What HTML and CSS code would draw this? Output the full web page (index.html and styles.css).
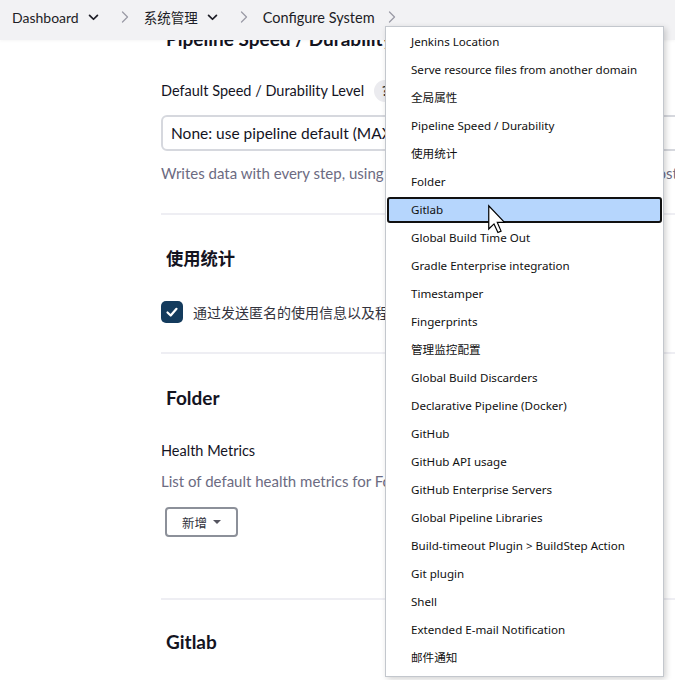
FILE: index.html
```html
<!DOCTYPE html>
<html lang="zh">
<head>
<meta charset="utf-8">
<title>Configure System</title>
<link rel="stylesheet" href="styles.css">
</head>
<body>
<header class="topbar">
  <nav class="crumbs">
    <span class="crumb">Dashboard</span>
    <svg class="drop" viewBox="0 0 12 8"><path d="M1.5 1.5 L6 6 L10.5 1.5" /></svg>
    <svg class="sep" viewBox="0 0 8 12"><path d="M1.5 1 L6.5 6 L1.5 11" /></svg>
    <span class="crumb cjk">系统管理</span>
    <svg class="drop" viewBox="0 0 12 8"><path d="M1.5 1.5 L6 6 L10.5 1.5" /></svg>
    <svg class="sep" viewBox="0 0 8 12"><path d="M1.5 1 L6.5 6 L1.5 11" /></svg>
    <span class="crumb wide">Configure System</span>
    <svg class="sep" viewBox="0 0 8 12"><path d="M1.5 1 L6.5 6 L1.5 11" /></svg>
  </nav>
</header>

<main class="content">
  <section class="section first">
    <h2 class="heading">Pipeline Speed / Durability</h2>
    <div class="label-row">
      <span class="label">Default Speed / Durability Level</span>
      <span class="help">?</span>
    </div>
    <div class="select">None: use pipeline default (MAX_SURVIVABILITY)</div>
    <p class="desc">Writes data with every step, using atomic writes, which is the slowest but most robust option to run</p>
  </section>

  <section class="section">
    <h2 class="heading cjk">使用统计</h2>
    <label class="check-row">
      <span class="checkbox"><svg viewBox="0 0 22 22"><path d="M6.5 11.5 L9.7 14.5 L15.5 7.8" /></svg></span>
      <span class="check-text">通过发送匿名的使用信息以及程序崩溃报告来帮助 Jenkins 做得更好。</span>
    </label>
  </section>

  <section class="section">
    <h2 class="heading">Folder</h2>
    <div class="label-row folder-label"><span class="label">Health Metrics</span></div>
    <p class="desc tight">List of default health metrics for Folders</p>
    <button class="add-btn">新增 <span class="caret"></span></button>
  </section>

  <section class="section last">
    <h2 class="heading">Gitlab</h2>
  </section>
</main>

<div class="menu">
  <div class="item">Jenkins Location</div>
  <div class="item">Serve resource files from another domain</div>
  <div class="item">全局属性</div>
  <div class="item">Pipeline Speed / Durability</div>
  <div class="item">使用统计</div>
  <div class="item">Folder</div>
  <div class="item active">Gitlab</div>
  <div class="item">Global Build Time Out</div>
  <div class="item">Gradle Enterprise integration</div>
  <div class="item">Timestamper</div>
  <div class="item">Fingerprints</div>
  <div class="item">管理监控配置</div>
  <div class="item">Global Build Discarders</div>
  <div class="item">Declarative Pipeline (Docker)</div>
  <div class="item">GitHub</div>
  <div class="item">GitHub API usage</div>
  <div class="item">GitHub Enterprise Servers</div>
  <div class="item">Global Pipeline Libraries</div>
  <div class="item">Build-timeout Plugin &gt; BuildStep Action</div>
  <div class="item">Git plugin</div>
  <div class="item">Shell</div>
  <div class="item">Extended E-mail Notification</div>
  <div class="item">邮件通知</div>
</div>

<svg class="cursor" viewBox="0 0 12 19" width="18" height="28.5">
  <path d="M0.5 0.5 L0.5 16 L4 12.6 L6.6 18.3 L8.7 17.4 L6.2 11.6 L11 11.6 Z" />
</svg>
</body>
</html>
```

FILE: styles.css
```css
html, body {
  margin: 0;
  padding: 0;
  background: #ffffff;
  overflow: hidden;
}

body {
  width: 675px;
  height: 680px;
  position: relative;
  font-family: Lato, "Noto Sans CJK SC", sans-serif;
  color: #14141f;
}

.topbar {
  position: absolute;
  top: 0;
  left: 0;
  right: 0;
  height: 40px;
  background: #f2f2f4;
  box-shadow: 0 1px 3px rgba(0, 0, 0, 0.04);
  z-index: 5;
}

.crumbs {
  display: flex;
  align-items: center;
  height: 34px;
  padding-left: 12px;
  font-size: 14px;
  color: #1d1d26;
}

.crumb {
  white-space: nowrap;
}

.crumb.cjk {
  font-size: 13.5px;
}

.crumb.wide {
  font-size: 14.5px;
}

.drop {
  width: 11px;
  height: 7px;
  margin-left: 9px;
  margin-right: 22px;
  fill: none;
  stroke: #1d1d26;
  stroke-width: 2;
  stroke-linecap: round;
  stroke-linejoin: round;
}

.sep {
  width: 8px;
  height: 12px;
  margin-right: 15px;
  fill: none;
  stroke: #9b9ba6;
  stroke-width: 1.3;
  stroke-linecap: round;
  stroke-linejoin: round;
}

.crumb + .sep {
  margin-left: 13px;
}

.content {
  padding: 25px 0 0 161px;
  width: 700px;
}

.section {
  border-top: 2px solid #eeeef3;
  padding-top: 30px;
}

.section.first {
  border-top: none;
  padding-top: 0;
  padding-bottom: 30px;
}

.section.last {
  padding-top: 28px;
}

.heading {
  margin: 0 0 0 5px;
  font-size: 19px;
  line-height: 28px;
  font-weight: 700;
  white-space: nowrap;
}

.heading.cjk {
  font-size: 17.3px;
}

.section.first .label-row {
  margin-top: 28px;
}

.label-row {
  display: flex;
  align-items: center;
  gap: 10px;
  margin-top: 28px;
  height: 20px;
}

.label-row.folder-label {
  margin-top: 29px;
}

.label {
  font-size: 14.5px;
  line-height: 20px;
  white-space: nowrap;
}

.help {
  width: 22px;
  height: 22px;
  border-radius: 50%;
  background: #ebebef;
  font-size: 13px;
  font-weight: 700;
  display: flex;
  align-items: center;
  justify-content: center;
  color: #333;
}

.select {
  margin-top: 14px;
  height: 32px;
  border: 2px solid #d6d8de;
  border-radius: 6px;
  padding: 0 8px;
  font-size: 15.5px;
  line-height: 32px;
  white-space: nowrap;
}

.desc {
  margin: 12px 0 0 0;
  font-size: 15px;
  line-height: 20px;
  color: #6c6b82;
  white-space: nowrap;
}

.desc.tight {
  margin-top: 10px;
}

.check-row {
  display: flex;
  align-items: center;
  gap: 10px;
  margin-top: 28px;
  margin-bottom: 29px;
  height: 22px;
}

.checkbox {
  width: 22px;
  height: 22px;
  border-radius: 5px;
  background: #143b5d;
  display: flex;
}

.checkbox svg {
  width: 22px;
  height: 22px;
  fill: none;
  stroke: #ffffff;
  stroke-width: 2.2;
  stroke-linecap: round;
  stroke-linejoin: round;
}

.check-text {
  font-size: 14px;
  color: #33333d;
  white-space: nowrap;
}

.add-btn {
  display: flex;
  align-items: center;
  gap: 6px;
  margin: 16px 0 61px 4px;
  height: 30px;
  padding: 0 15px 0 15px;
  border: 2px solid #8c9099;
  border-radius: 4px;
  background: #ffffff;
  font-family: "Noto Sans CJK SC", sans-serif;
  font-size: 12.5px;
  color: #33333d;
}

.caret {
  width: 0;
  height: 0;
  border-left: 4px solid transparent;
  border-right: 4px solid transparent;
  border-top: 4px solid #555560;
}

.menu {
  position: absolute;
  left: 385px;
  top: 26px;
  width: 277px;
  padding: 1px 0 4px 0;
  display: flex;
  flex-direction: column;
  background: #ffffff;
  border: 1px solid #c3c7cd;
  box-shadow: 2px 2px 6px rgba(0, 0, 0, 0.18);
  z-index: 10;
  font-family: "Noto Sans", "Noto Sans CJK SC", sans-serif;
  font-size: 11.6px;
  color: #111;
}

.item {
  height: 22px;
  margin: 1px;
  padding-left: 22px;
  border: 2px solid transparent;
  border-radius: 3px;
  line-height: 22px;
  white-space: nowrap;
}

.item.active {
  background: #b6d6fd;
  border-color: #111111;
}

.cursor {
  position: absolute;
  left: 487.5px;
  top: 204.5px;
  z-index: 20;
  overflow: visible;
}

.cursor path {
  fill: #ffffff;
  stroke: #000000;
  stroke-width: 0.8;
  stroke-linejoin: miter;
}
```
